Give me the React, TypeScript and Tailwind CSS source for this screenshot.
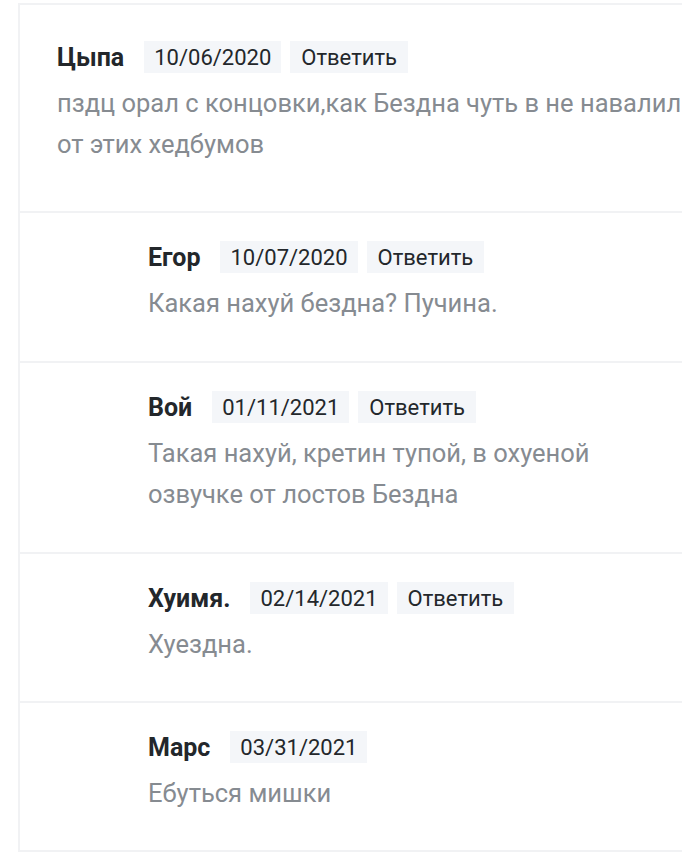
import React from 'react';

type Comment = {
  name: string;
  date: string;
  text: string;
  canReply?: boolean;
  tall?: boolean;
};

const comments: Comment[] = [
  {
    name: 'Цыпа',
    date: '10/06/2020',
    text: 'пздц орал с концовки,как Бездна чуть в не навалил от этих хедбумов',
    canReply: true,
  },
  { name: 'Егор', date: '10/07/2020', text: 'Какая нахуй бездна? Пучина.', canReply: true, tall: true },
  {
    name: 'Вой',
    date: '01/11/2021',
    text: 'Такая нахуй, кретин тупой, в охуеной озвучке от лостов Бездна',
    canReply: true,
    tall: true,
  },
  { name: 'Хуимя.', date: '02/14/2021', text: 'Хуездна.', canReply: true },
  { name: 'Марс', date: '03/31/2021', text: 'Ебуться мишки' },
];

const CommentItem: React.FC<{ c: Comment; first: boolean }> = ({ c, first }) => {
  let boxClass = 'border-l-2 border-b-2 border-[#f1f2f4] pl-[128px] pr-[30px] pt-[28px] pb-[36px]';
  if (first) boxClass = 'border-l-2 border-b-2 border-[#f1f2f4] pl-[37px] pt-[36px] pb-[46px]';
  else if (c.tall) boxClass = 'border-l-2 border-b-2 border-[#f1f2f4] pl-[128px] pr-[30px] pt-[28px] pb-[37px]';

  return (
    <div className={boxClass}>
      <div className="flex items-center h-8">
        <span className="text-[25px] font-bold text-[#23272b] mr-5 leading-none">{c.name}</span>
        <span className="bg-[#f4f6f9] h-8 px-[10px] flex items-center text-[22px] text-[#23272b]">{c.date}</span>
        {c.canReply && (
          <span className="bg-[#f4f6f9] h-8 px-[11px] ml-[9px] flex items-center text-[22px] text-[#23272b]">
            Ответить
          </span>
        )}
      </div>
      <p
        className={
          first
            ? 'mt-[10px] mr-[-12px] text-[25.5px] leading-[41px] text-[#868b91]'
            : 'mt-[10px] text-[25.5px] leading-[41px] text-[#868b91]'
        }
      >
        {c.text}
      </p>
    </div>
  );
};

export default function App() {
  return (
    <div className="w-[700px] h-[854px] bg-white overflow-hidden font-['Roboto',sans-serif]">
      <div className="ml-[18px] mt-[3px] w-[664px] border-t-2 border-[#f1f2f4]">
        {comments.map((c, i) => (
          <CommentItem key={i} c={c} first={i === 0} />
        ))}
      </div>
    </div>
  );
}
